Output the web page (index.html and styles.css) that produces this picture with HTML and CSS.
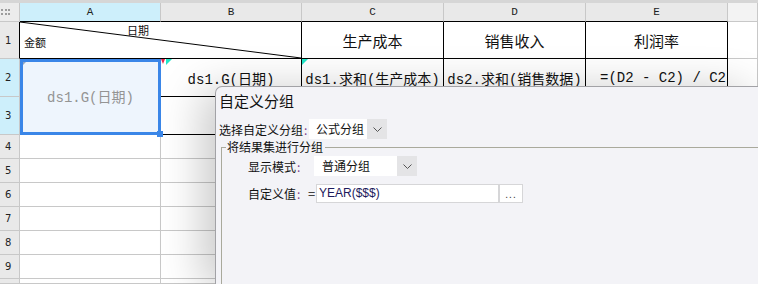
FILE: index.html
```html
<!DOCTYPE html>
<html lang="zh-CN">
<head>
    <meta charset="UTF-8">
    <title>自定义分组</title>
    <link rel="stylesheet" href="styles.css">
</head>
<body>
<div class="topbar"></div>
<div class="sheet">
    <div class="corner"><i></i><i></i><i></i><i></i><i></i><i></i></div>
    <div class="colhead sel rb">A</div>
    <div class="colhead rb">B</div>
    <div class="colhead rb">C</div>
    <div class="colhead rb">D</div>
    <div class="colhead rb">E</div>
    <div class="colhead blank"></div>

    <div class="rowhead first">1</div>
    <div class="cell rc diag">
        <svg viewBox="0 0 100 100" preserveAspectRatio="none"><line x1="0" y1="0" x2="100" y2="100" stroke="#000" stroke-width="1" vector-effect="non-scaling-stroke"/></svg>
        <div class="d-top">日期</div>
        <div class="d-left">金额</div>
    </div>
    <div class="cell rc title">生产成本</div>
    <div class="cell rc title">销售收入</div>
    <div class="cell rc title">利润率</div>
    <div class="cell"></div>

    <div class="rowhead sel">2</div>
    <div class="cell selected"><span class="mark grey"></span>ds1.G(日期)</div>
    <div class="cell rc data"><span class="mark red"></span><span class="mark teal second"></span>ds1.G(日期)</div>
    <div class="cell rc data"><span class="mark teal"></span>ds1.求和(生产成本)</div>
    <div class="cell rc data">ds2.求和(销售数据)</div>
    <div class="cell rc data formula">=(D2 - C2) / C2</div>
    <div class="cell"></div>

    <div class="rowhead sel">3</div>
    <div class="cell rc"></div>
    <div class="cell rc"></div>
    <div class="cell rc"></div>
    <div class="cell rc"></div>
    <div class="cell"></div>

    <div class="rowhead">4</div><div class="cell"></div><div class="cell"></div><div class="cell"></div><div class="cell"></div><div class="cell"></div><div class="cell"></div>
    <div class="rowhead">5</div><div class="cell"></div><div class="cell"></div><div class="cell"></div><div class="cell"></div><div class="cell"></div><div class="cell"></div>
    <div class="rowhead">6</div><div class="cell"></div><div class="cell"></div><div class="cell"></div><div class="cell"></div><div class="cell"></div><div class="cell"></div>
    <div class="rowhead">7</div><div class="cell"></div><div class="cell"></div><div class="cell"></div><div class="cell"></div><div class="cell"></div><div class="cell"></div>
    <div class="rowhead">8</div><div class="cell"></div><div class="cell"></div><div class="cell"></div><div class="cell"></div><div class="cell"></div><div class="cell"></div>
    <div class="rowhead">9</div><div class="cell"></div><div class="cell"></div><div class="cell"></div><div class="cell"></div><div class="cell"></div><div class="cell"></div>
    <div class="rowhead"></div><div class="cell"></div><div class="cell"></div><div class="cell"></div><div class="cell"></div><div class="cell"></div><div class="cell"></div>
</div>

<div class="dialog">
    <div class="dlg-title">自定义分组</div>
    <div class="dlg-row">
        <label class="lbl-wide">选择自定义分组<em>:</em></label>
        <div class="combo small">
            <span class="combo-text">公式分组</span>
            <span class="combo-arrow"><svg width="9" height="5" viewBox="0 0 9 5"><path d="M0.5 0.5 L4.5 4.5 L8.5 0.5" fill="none" stroke="#555" stroke-width="1"/></svg></span>
        </div>
    </div>
    <fieldset>
        <legend>将结果集进行分组</legend>
        <div class="f-row">
            <label class="lbl">显示模式<em>:</em></label>
            <div class="combo wide">
                <span class="combo-text">普通分组</span>
                <span class="combo-arrow"><svg width="9" height="5" viewBox="0 0 9 5"><path d="M0.5 0.5 L4.5 4.5 L8.5 0.5" fill="none" stroke="#555" stroke-width="1"/></svg></span>
            </div>
        </div>
        <div class="f-row second">
            <label class="lbl">自定义值<em>:</em></label>
            <span class="eq">=</span>
            <div class="value">YEAR($$$)</div>
            <button class="more">...</button>
        </div>
    </fieldset>
</div>
</body>
</html>
```

FILE: styles.css
```css
html {
    background: #fff;
}

body {
    margin: 0;
    width: 758px;
    height: 284px;
    overflow: hidden;
    position: relative;
    font-family: "Noto Sans CJK SC", sans-serif;
}

.topbar {
    height: 3px;
    background: #d6d6d6;
}

.sheet {
    display: grid;
    grid-template-columns: 20px 141px 141px 142px 142px 142px 1fr;
    grid-template-rows: 19px 37px 38px 38px repeat(6, 24px) 5px;
}

.sheet > div {
    box-sizing: border-box;
    min-width: 0;
}

.corner {
    background: #ececec;
    border-right: 1px solid #c8c8c8;
    border-bottom: 1px solid #c8c8c8;
    display: grid;
    grid-template-columns: repeat(3, 2px);
    grid-template-rows: repeat(2, 2px);
    gap: 2px 1.5px;
    align-content: center;
    padding-left: 1px;
}

.corner i {
    background: #9c9c9c;
}

.colhead {
    background: #e9e9e9;
    border-right: 1px solid #c8c8c8;
    border-bottom: 1px solid #c8c8c8;
    font-family: "Liberation Mono", monospace;
    font-size: 11px;
    line-height: 18px;
    text-align: center;
    color: #222;
}

.colhead.rb {
    border-bottom-color: #000;
}

.colhead.sel {
    background: #cdeffb;
}

.colhead.blank {
    background: #f3f3f3;
}

.rowhead {
    background: #e9e9e9;
    border-right: 1px solid #c8c8c8;
    border-bottom: 1px solid #c8c8c8;
    font-family: "DejaVu Sans", sans-serif;
    font-size: 10px;
    color: #222;
    display: flex;
    align-items: center;
    padding-left: 5px;
}

.rowhead.first {
    border-right-color: #000;
}

.rowhead.sel {
    background: #cdeffb;
}

.cell {
    border-right: 1px solid #c8c8c8;
    border-bottom: 1px solid #c8c8c8;
    background: #fff;
    position: relative;
}

.cell.rc {
    border-right-color: #000;
    border-bottom-color: #000;
}

.title {
    display: flex;
    align-items: center;
    justify-content: center;
    font-size: 15px;
    color: #111;
}

.data, .selected {
    display: flex;
    align-items: center;
    justify-content: center;
    white-space: nowrap;
    overflow: hidden;
    font-family: "Liberation Mono", "Noto Sans CJK SC", monospace;
    font-size: 14px;
    color: #111;
}

.data.formula {
    justify-content: flex-start;
    padding-left: 14px;
}

.diag {
    grid-column: span 2;
    font-size: 11px;
    color: #111;
}

.diag svg {
    position: absolute;
    left: 0;
    top: 0;
    width: 100%;
    height: 100%;
}

.d-top {
    padding: 2px 0 0 107px;
    line-height: 12px;
}

.d-left {
    padding-left: 4px;
    line-height: 12px;
}

.selected {
    grid-row: span 2;
    border: 3px solid #3a86e8;
    background: #eef5fd;
    color: #949494;
    overflow: visible;
    padding-bottom: 2px;
}

.selected::after {
    content: "";
    position: absolute;
    right: -5px;
    bottom: -5px;
    width: 6px;
    height: 6px;
    background: #3a86e8;
    z-index: 2;
}

.mark {
    position: absolute;
    top: 0;
    left: 0;
    width: 0;
    height: 0;
    border-top: 6px solid #20e6c8;
    border-right: 6px solid transparent;
}

.mark.second {
    left: 5px;
}

.mark.red {
    border-top: 5px solid #e8264a;
    border-left: 2px solid transparent;
    border-right: 2px solid transparent;
}

.mark.grey {
    border-top: 3px solid #8fa6c4;
    border-right: 3px solid transparent;
}

/* dialog floating over the sheet */
.dialog {
    position: absolute;
    left: 215px;
    top: 86px;
    right: 0;
    bottom: 0;
    background: #f3f3f7;
    border-top: 1px solid #a2a2a6;
    border-left: 1px solid #a2a2a6;
    border-radius: 7px 0 0 0;
    box-shadow: -12px 4px 44px rgba(0, 0, 0, 0.22);
    padding: 4px 0 0 3px;
    color: #111;
    font-size: 12px;
    overflow: hidden;
}

.dlg-title {
    font-size: 15px;
    line-height: 20px;
}

.dlg-row {
    display: flex;
    align-items: center;
    margin-top: 8px;
    height: 20px;
}

.lbl-wide {
    width: 90px;
}

em {
    font-style: normal;
    color: #7a3f8e;
    padding-left: 1px;
}

.combo {
    display: flex;
    height: 20px;
}

.combo-text {
    background: #fff;
    line-height: 20px;
    padding-left: 7px;
}

.combo.small .combo-text {
    width: 51px;
}

.combo.wide {
    margin-left: 6px;
}

.combo.wide .combo-text {
    width: 75px;
    padding-left: 8px;
}

.combo-arrow {
    width: 20px;
    background: #e4e4e6;
    display: flex;
    align-items: center;
    justify-content: center;
}

fieldset {
    margin: 0 0 0 2px;
    padding: 1px 0 0 4px;
    border: none;
    border-top: 1px solid #a9a99c;
    border-left: 1px solid #a9a99c;
    height: 200px;
}

legend {
    padding: 0 2px 0 1px;
    line-height: 16px;
    font-size: 12px;
}

.f-row {
    display: flex;
    align-items: center;
    margin-left: 22px;
    height: 20px;
}

.f-row.second {
    margin-top: 8px;
    height: 19px;
}

.lbl {
    width: 60px;
}

.eq {
    width: 8px;
    font-size: 13px;
}

.value {
    box-sizing: border-box;
    width: 183px;
    height: 19px;
    background: #fff;
    border: 1px solid #d6d6d8;
    padding-left: 2px;
    font-family: "Liberation Sans", sans-serif;
    font-size: 12px;
    line-height: 17px;
    color: #1d1a5c;
}

.more {
    box-sizing: border-box;
    width: 24px;
    height: 19px;
    margin: 0;
    padding: 3px 0 0;
    background: #fff;
    border: 1px solid #d6d6d8;
    font-family: "Liberation Sans", sans-serif;
    font-size: 10px;
    letter-spacing: 1px;
    color: #333;
    line-height: 14px;
}
```
